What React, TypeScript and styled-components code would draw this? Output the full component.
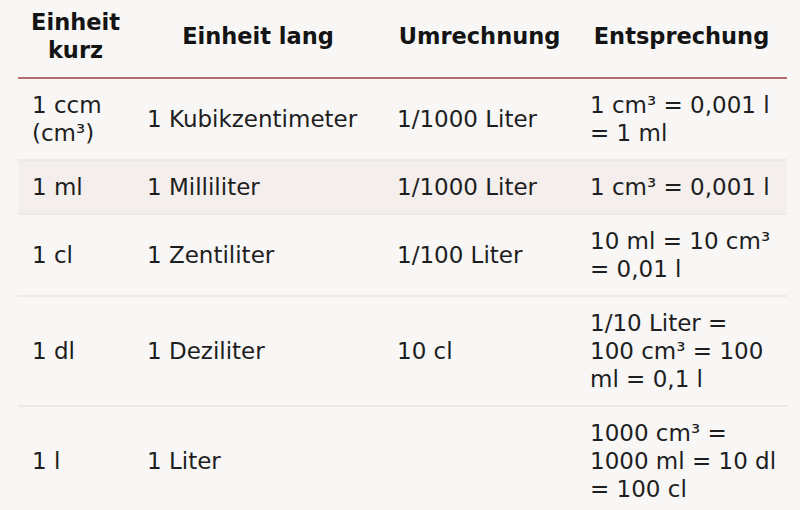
import React from "react";
import styled, { createGlobalStyle } from "styled-components";

const Global = createGlobalStyle`
  html, body { margin: 0; padding: 0; background: #f8f7f6; overflow: hidden; }
  body { font-family: "DejaVu Sans", Verdana, sans-serif; color: #1c1c1c; }
`;

const Page = styled.div`
  width: 800px;
  height: 510px;
  padding-left: 18px;
  box-sizing: border-box;
  overflow: hidden;
`;

const Table = styled.table`
  width: 769px;
  border-collapse: collapse;
  table-layout: fixed;
  font-size: 23px;
  line-height: 28px;
`;

const Th = styled.th`
  font-weight: bold;
  font-size: 22.5px;
  text-align: center;
  padding: 8px 2px 13px;
  color: #141414;
  border-bottom: 2px solid #b86a6a;
  white-space: nowrap;
`;

const Row = styled.tr<{ $tint?: boolean }>`
  background: ${(p) => (p.$tint ? "#f4eeed" : "transparent")};
  border-bottom: 2px solid #ebeae9;
`;

const Td = styled.td`
  padding: 12px 14px;
  vertical-align: middle;
  text-align: left;
  white-space: nowrap;
  color: #1e1e1e;
`;

const rows: { c: React.ReactNode[]; tint?: boolean }[] = [
  { c: [<>1 ccm<br />(cm³)</>, "1 Kubikzentimeter", "1/1000 Liter", <>1 cm³ = 0,001 l<br />= 1 ml</>] },
  { c: ["1 ml", "1 Milliliter", "1/1000 Liter", "1 cm³ = 0,001 l"], tint: true },
  { c: ["1 cl", "1 Zentiliter", "1/100 Liter", <>10 ml = 10 cm³<br />= 0,01 l</>] },
  { c: ["1 dl", "1 Deziliter", "10 cl", <>1/10 Liter =<br />100 cm³ = 100<br />ml = 0,1 l</>] },
  { c: ["1 l", "1 Liter", "", <>1000 cm³ =<br />1000 ml = 10 dl<br />= 100 cl</>] },
];

export default function App() {
  return (
    <>
      <Global />
      <Page>
        <Table>
          <colgroup>
            <col style={{ width: 115 }} />
            <col style={{ width: 250 }} />
            <col style={{ width: 193 }} />
            <col style={{ width: 211 }} />
          </colgroup>
          <thead>
            <tr>
              <Th>Einheit<br />kurz</Th>
              <Th>Einheit lang</Th>
              <Th>Umrechnung</Th>
              <Th>Entsprechung</Th>
            </tr>
          </thead>
          <tbody>
            {rows.map((r, i) => (
              <Row key={i} $tint={r.tint}>
                {r.c.map((cell, j) => (
                  <Td key={j}>{cell}</Td>
                ))}
              </Row>
            ))}
          </tbody>
        </Table>
      </Page>
    </>
  );
}
